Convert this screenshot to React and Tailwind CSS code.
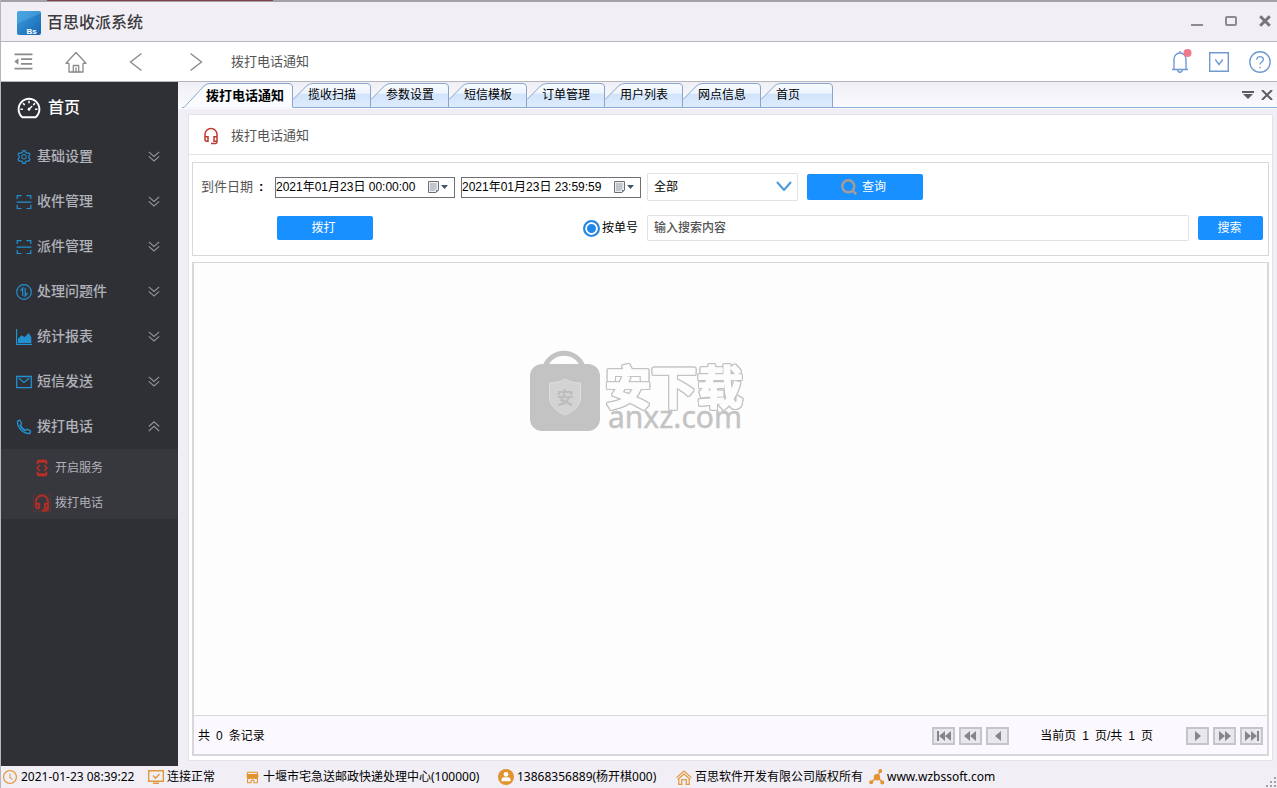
import React, { useState } from "react";
import {
  AiOutlineSetting,
  AiOutlineDashboard,
  AiOutlineClockCircle,
  AiOutlineMenuFold,
  AiFillShop,
} from "react-icons/ai";
import { MdOutlineHeadsetMic, MdDeveloperMode } from "react-icons/md";

function AreaIcon({ className }) {
  return (
    <svg viewBox="0 0 16 16" className={className} fill="currentColor">
      <path d="M0 0h1.200v14.700H16V16H0z" />
      <path d="M2 14V9.800l3.700-3.600 2.800 2L12.700 4l2.600 4.200V14z" />
    </svg>
  );
}

function ScanIcon({ className }) {
  return (
    <svg viewBox="0 0 16 16" className={className} fill="none" stroke="currentColor" strokeWidth="1.200">
      <path d="M1.200 5V1.700h4.300M10.500 1.700h4.300V5M1.200 11v3.500h4.300M10.500 14.500h4.300V11M.6 8.200h14.800" />
    </svg>
  );
}

function MailIcon({ className }) {
  return (
    <svg viewBox="0 0 16 16" className={className} fill="none" stroke="currentColor" strokeWidth="1.300">
      <path d="M.7 2.500h14.600v11.200H.7zM2.800 4.200 8 8.500l5.200-4.300" />
    </svg>
  );
}

function PhoneIcon({ className }) {
  return (
    <svg viewBox="0 0 16 16" className={className} fill="none" stroke="currentColor" strokeWidth="1.300" strokeLinejoin="round">
      <path d="M1.500 1.800 4 1.200l1.600 3.500-1.400 1.700c1.100 2.400 2.700 4 5.200 5.200l1.700-1.400 3.500 1.600-.5 2.700C6.800 14.800 1.200 9.200 1.500 1.800z" />
      <path d="M4.200 6.400c1.100 2.400 2.700 4 5.200 5.200" strokeWidth="1.800" />
    </svg>
  );
}

function SwapCircleIcon({ className }) {
  return (
    <svg viewBox="0 0 16 16" className={className} fill="none" stroke="currentColor" strokeWidth="1.200">
      <circle cx="8" cy="8" r="7.300" />
      <path d="M4.300 7 6.700 4v8.200M9.200 3.800V12l2.500-3.200" />
    </svg>
  );
}

function HouseIcon({ className }) {
  return (
    <svg viewBox="0 0 22 22" className={className} fill="none" stroke="currentColor" strokeWidth="1.3" strokeLinejoin="round" strokeLinecap="round">
      <path d="M4 12.300H1L11 1.500l10 10.800h-3V21H4z" />
      <path d="M8.300 21v-6.500h5.400V21M11 17v4" />
    </svg>
  );
}

function AngleIcon({ className, d }) {
  return (
    <svg viewBox="0 0 14 20" className={className} fill="none" stroke="currentColor" strokeWidth="1.4">
      <path d={d} />
    </svg>
  );
}

function DoubleChevron({ up }) {
  return (
    <svg viewBox="0 0 12 12" className="h-3 w-3 shrink-0" fill="none" stroke="currentColor" strokeWidth="1.100">
      <path d={up ? "M.8 5.500 6 .8l5.200 4.700M.8 10 6 5.300 11.200 10" : "M.8.800 6 5.500 11.200.8M.8 5.300 6 10l5.200-4.700"} />
    </svg>
  );
}

function BellIcon() {
  return (
    <svg viewBox="0 0 22 26" className="h-[26px] w-[22px]" fill="none" stroke="#6f9bd1" strokeWidth="1.400">
      <path d="M2 21.500h16M4 21.500V11a6 6 0 0 1 12 0v10.500M10 5V3M7.800 22a2.200 2.200 0 0 0 4.400 0" />
      <circle cx="17.500" cy="5" r="4" fill="#ee7a8a" stroke="none" />
    </svg>
  );
}

function DropBoxIcon() {
  return (
    <svg viewBox="0 0 20 20" className="h-5 w-5" fill="none" stroke="#6f9bd1" strokeWidth="1.400">
      <path d="M.7.7h18.600v18.600H.7zM6.300 7.500l3.700 5 3.700-5" />
    </svg>
  );
}

function HelpIcon() {
  return (
    <svg viewBox="0 0 22 22" className="h-[22px] w-[22px]" fill="none" stroke="#6f9bd1" strokeWidth="1.400">
      <circle cx="11" cy="11" r="10.200" />
      <path d="M7.800 8.800c0-4.300 6.600-4.100 6.600-.2 0 2.500-3.300 2.400-3.300 5" />
      <path d="M11.100 15.700v1.600" />
    </svg>
  );
}

function CalendarIcon() {
  return (
    <svg viewBox="0 0 20 14" className="h-[14px] w-5" fill="none">
      <path d="M.5 1.500h10v8.500L8 12.500H.5z" fill="#eceef2" stroke="#6d6f76" />
      <path d="M2 4h7M2 6h7M2 8h7M2 10h5M3 3v8M5 3v8M7 3v7" stroke="#a9adb8" strokeWidth=".8" />
      <path d="M10.500 10 8 12.500V10z" fill="#6d6f76" />
      <path d="M13 5h7l-3.500 4z" fill="#40566b" />
    </svg>
  );
}

function MonitorIcon() {
  return (
    <svg viewBox="0 0 16 14" className="h-[14px] w-4 shrink-0" fill="none" stroke="#e2983c" strokeWidth="1.400">
      <path d="M.7.7h14.600v10.600H.7zM5 13.300h6M5 5.500l2.500 2.700 4-4.200" />
    </svg>
  );
}

function UserIcon() {
  return (
    <svg viewBox="0 0 16 16" className="h-4 w-4 shrink-0">
      <circle cx="8" cy="8" r="8" fill="#e2922e" />
      <circle cx="8" cy="5.300" r="2.400" fill="#fff" />
      <path d="M3.500 12.200V10.500c0-1.300 1-2.300 2.300-2.300h4.400c1.300 0 2.300 1 2.300 2.300v1.700z" fill="#fff" />
    </svg>
  );
}

function CompanyIcon() {
  return (
    <svg viewBox="0 0 16 15" className="h-[15px] w-4 shrink-0" fill="none" stroke="#e2983c" strokeWidth="1.200">
      <path d="M.6 7.600 8 1l7.400 6.600M2.800 9v5.300h3V9.600h4.400v4.700h3V9M1.800 9.500 8 4l6.200 5.500" />
    </svg>
  );
}

function NetworkIcon() {
  return (
    <svg viewBox="0 0 16 16" className="h-4 w-4 shrink-0" fill="#e2922e" stroke="#e2922e">
      <path d="M8 8l3-5.500M8 8l-5.500 5M8 8l5.500 5" strokeWidth="1.400" />
      <circle cx="8" cy="8.300" r="3.200" stroke="none" />
      <circle cx="11.300" cy="2" r="1.900" stroke="none" />
      <circle cx="2.200" cy="13.200" r="2" stroke="none" />
      <circle cx="13.300" cy="13.600" r="2" stroke="none" />
    </svg>
  );
}

const menu = [
  { label: "基础设置", Icon: AiOutlineSetting },
  { label: "收件管理", Icon: ScanIcon },
  { label: "派件管理", Icon: ScanIcon },
  { label: "处理问题件", Icon: SwapCircleIcon },
  { label: "统计报表", Icon: AreaIcon },
  { label: "短信发送", Icon: MailIcon },
  { label: "拨打电话", Icon: PhoneIcon, open: true },
];

const tabs = ["揽收扫描", "参数设置", "短信模板", "订单管理", "用户列表", "网点信息", "首页"];

function TitleBar() {
  return (
    <header className="flex h-[42px] shrink-0 flex-col border-b border-[#b7b5bc] bg-[#f1eff4]">
      <div className="flex h-[2px] bg-[#a5a1a8] pl-[46px]">
        <div className="h-[1px] w-[226px] bg-[#7d4146]" />
      </div>
      <div className="flex flex-1 items-center pt-[2px] pr-[6px] pl-4">
        <svg viewBox="0 0 24 24" className="h-6 w-6">
          <defs>
            <linearGradient id="logo" x1="0" y1="0" x2="1" y2="1">
              <stop offset="0" stopColor="#3da0e0" />
              <stop offset="1" stopColor="#1565ae" />
            </linearGradient>
          </defs>
          <rect width="24" height="24" rx="2" fill="url(#logo)" />
          <path d="M0 13 24 2v-.5L22 0H2L0 2z" fill="#5cb6ea" opacity=".4" />
          <text x="9.500" y="22.500" fontSize="8" fontWeight="700" fill="#fff" fontFamily="Liberation Sans, sans-serif">Bs</text>
        </svg>
        <h1 className="ml-[6px] text-[16px] leading-6 font-medium text-[#3c3b40]">百思收派系统</h1>
        <div className="ml-auto flex items-center gap-[22px] pb-[4px] text-[#8d8a92]">
          <button aria-label="最小化" className="block">
            <svg viewBox="0 0 12 12" className="h-3 w-3"><path d="M0 10h12" stroke="currentColor" strokeWidth="2" /></svg>
          </button>
          <button aria-label="最大化" className="block">
            <svg viewBox="0 0 12 12" className="h-3 w-3"><rect x="1" y="2" width="10" height="8" rx="1" fill="none" stroke="currentColor" strokeWidth="2" /></svg>
          </button>
          <button aria-label="关闭" className="block text-[#77747c]">
            <svg viewBox="0 0 12 12" className="h-3 w-3"><path d="m1.200 1.200 9.600 9.600m0-9.600-9.600 9.600" stroke="currentColor" strokeWidth="3" /></svg>
          </button>
        </div>
      </div>
    </header>
  );
}

function Toolbar() {
  return (
    <div className="flex h-10 shrink-0 items-center border-b border-[#b7b5bc] bg-white pr-[6px] pl-[11px] text-[#8b8b8d]">
      <button aria-label="收起菜单"><AiOutlineMenuFold className="h-[23px] w-[23px]" /></button>
      <button aria-label="主页" className="ml-[30px]"><HouseIcon className="h-[22px] w-[22px]" /></button>
      <button aria-label="后退" className="ml-[42px]"><AngleIcon className="h-5 w-[14px]" d="M12.500 1.500 1.500 10l11 8.500" /></button>
      <button aria-label="前进" className="ml-[46px]"><AngleIcon className="h-5 w-[14px]" d="M1.500 1.500 12.500 10l-11 8.500" /></button>
      <span className="ml-7 text-[13px] leading-5 text-[#555]">拨打电话通知</span>
      <div className="ml-auto flex items-center">
        <button aria-label="消息" className="pb-[2px]"><BellIcon /></button>
        <button aria-label="下拉" className="ml-[17px]"><DropBoxIcon /></button>
        <button aria-label="帮助" className="ml-5"><HelpIcon /></button>
      </div>
    </div>
  );
}

function Sidebar() {
  return (
    <nav className="w-[177px] shrink-0 bg-[#2f3036]">
      <a href="#home" className="flex h-[52px] items-center gap-[6px] pl-[15px] text-[16px] font-medium text-white">
        <AiOutlineDashboard className="h-[26px] w-[26px]" />
        首页
      </a>
      {menu.map(({ label, Icon, open }) => (
        <button key={label} aria-expanded={!!open} className="flex h-[45px] w-full items-center pr-[18px] pl-[15px] text-[14px] font-medium text-[#b1b1b9]">
          <Icon className="h-4 w-4 text-[#2391cf]" />
          <span className="ml-[5px]">{label}</span>
          <span className="ml-auto text-[#94949a]"><DoubleChevron up={open} /></span>
        </button>
      ))}
      <div className="bg-[#37383e] text-[12px] text-[#b1b1b9]">
        <a href="#service" className="flex h-[35px] items-center gap-1 pt-[2px] pl-8">
          <MdDeveloperMode className="h-[18px] w-[18px] text-[#bb2d25]" />
          开启服务
        </a>
        <a href="#call" className="flex h-[35px] items-center gap-1 pt-[2px] pl-8">
          <MdOutlineHeadsetMic className="h-[18px] w-[18px] text-[#bb2d25]" stroke="currentColor" strokeWidth=".6" />
          拨打电话
        </a>
      </div>
    </nav>
  );
}

function Tab({ label, last }) {
  const w = last ? 72 : 78;
  return (
    <button role="tab" className={last ? "relative h-[25px] w-[72px] pl-[15px] text-left" : "relative h-[25px] w-[78px] pl-[15px] text-left"}>
      <svg className="absolute inset-0 h-full w-full" viewBox={`0 0 ${w} 25`} preserveAspectRatio="none">
        <defs>
          <linearGradient id="tabfill" x1="0" y1="0" x2="0" y2="1">
            <stop offset="0" stopColor="#f9fcff" />
            <stop offset=".4" stopColor="#ecf4fe" />
            <stop offset=".45" stopColor="#d2e4fb" />
            <stop offset="1" stopColor="#deecfd" />
          </linearGradient>
        </defs>
        <path d={`M0 24.500V16.500L13.500 3Q16 .5 20 .5H${w - 4}q3.500 0 3.500 3.500v20.500z`} fill="url(#tabfill)" />
        <path d={`M0 16.500 13.500 3Q16 .5 20 .5H${w - 4}q3.500 0 3.500 3.500v20.500`} fill="none" stroke="#8aa5cc" />
        <path d={`M0 24.500H${w}`} stroke="#8aaed6" />
      </svg>
      <span className="relative">{label}</span>
    </button>
  );
}

function TabStrip() {
  return (
    <div className="flex h-[27px] shrink-0 bg-linear-to-b from-[#efeef4] to-[#fcfcff] pt-[1px] pl-1 text-[12px] leading-[25px] text-black">
      <div role="tablist" className="flex h-[25px]">
        <button role="tab" aria-selected="true" className="relative h-[25px] w-[111px] pl-6 text-left text-[13px] font-bold">
          <svg className="absolute inset-0 h-full w-full" viewBox="0 0 111 25" preserveAspectRatio="none">
            <path d="M0 24.500h2L22 3Q24.500.5 28 .5h79q3.500 0 3.500 3.500v20.500" fill="#fafcff" stroke="#8aa5cc" />
            <path d="M3 24.500h107" stroke="#f5f5f9" />
          </svg>
          <span className="relative">拨打电话通知</span>
        </button>
        {tabs.map((t, i) => <Tab key={t} label={t} last={i === tabs.length - 1} />)}
      </div>
      <div className="flex h-[25px] flex-1 items-center justify-end gap-[7px] border-b border-[#8aaed6] pr-1 text-[#5c5c62]">
        <button aria-label="标签列表">
          <svg viewBox="0 0 12 10" className="h-[10px] w-3" fill="currentColor"><path d="M0 1h12v2H0zM1 4h10L6 9z" /></svg>
        </button>
        <button aria-label="关闭标签">
          <svg viewBox="0 0 12 10" className="h-[10px] w-3"><path d="m1 0 10 10M11 0 1 10" stroke="currentColor" strokeWidth="2" /></svg>
        </button>
      </div>
    </div>
  );
}

function DateField({ label, initial }) {
  const [value, setValue] = useState(initial);
  return (
    <div className="flex h-[21px] w-[180px] items-center border border-[#6f6f74] bg-white">
      <input aria-label={label} value={value} onChange={(e) => setValue(e.target.value)} className="w-[152px] min-w-0 text-[12px] leading-4 text-black outline-none" />
      <button aria-label={label + "选择"}><CalendarIcon /></button>
    </div>
  );
}

function Filters() {
  return (
    <form className="mx-[3px] mt-[7px] flex flex-col gap-[14px] border border-[#d8d8dc] px-2 pt-[10px] pb-[14px] text-[12px]" onSubmit={(e) => e.preventDefault()}>
      <div className="flex h-7 items-center">
        <span className="w-[74px] text-[13px] text-[#555]">到件日期<span className="ml-[6px] font-bold text-black">:</span></span>
        <DateField label="开始日期" initial="2021年01月23日 00:00:00" />
        <div className="ml-[6px]"><DateField label="结束日期" initial="2021年01月23日 23:59:59" /></div>
        <div className="relative ml-[6px] h-7 w-[151px]">
          <select aria-label="筛选" className="h-7 w-full appearance-none rounded-[1px] border border-[#e2e2e5] bg-white pl-[6px] text-black">
            <option>全部</option>
          </select>
          <svg viewBox="0 0 16 10" className="pointer-events-none absolute top-2 right-[6px] h-[10px] w-4" fill="none" stroke="#4a98d9" strokeWidth="2">
            <path d="m1 1 7 8L15 1" />
          </svg>
        </div>
        <button className="ml-[9px] flex h-[26px] w-[116px] items-center justify-center gap-[5px] rounded-xs bg-[#1890ff] pr-[3px] text-white">
          <svg viewBox="0 0 16 16" className="h-4 w-4" fill="none" stroke="#a99b96" strokeWidth="2.400">
            <circle cx="7.300" cy="7.300" r="6" />
            <path d="m11.300 11.300 4 4" />
          </svg>
          查询
        </button>
      </div>
      <div className="flex h-[26px] items-center">
        <button className="ml-[76px] h-6 w-24 rounded-xs bg-[#1890ff] pr-[3px] text-white">拨打</button>
        <label className="ml-[210px] flex items-center gap-[2px] text-black">
          <input type="radio" name="by" defaultChecked className="h-[17px] w-[17px] appearance-none rounded-full border-2 border-[#2a87e0] bg-[#1f86ea] shadow-[inset_0_0_0_2px_white]" />
          按单号
        </label>
        <input aria-label="搜索内容" placeholder="输入搜索内容" className="ml-[9px] h-[26px] min-w-0 flex-1 rounded-[1px] border border-[#e2e2e5] bg-white pl-[6px] font-medium text-[#555] outline-none placeholder:text-[#555]" />
        <button className="mr-[-3px] ml-[9px] h-6 w-[65px] rounded-xs bg-[#1890ff] pr-[2px] text-white">搜索</button>
      </div>
    </form>
  );
}

function PagerButton({ label, d }) {
  return (
    <button aria-label={label} className="h-[18px] w-[23px] border-2 border-[#c6c5ca] bg-[#e9e8ed]">
      <svg viewBox="0 0 19 14" className="h-[14px] w-[19px]" fill="#85858b"><path d={d} /></svg>
    </button>
  );
}

function Pager() {
  return (
    <div className="flex h-[39px] items-center border-t border-[#d8d8dc] bg-[#fbf9fd] pt-[2px] pr-1 pl-1 text-[12px] text-black">
      <p className="flex gap-[6px]"><span>共</span><span>0</span><span>条记录</span></p>
      <div className="ml-auto flex items-center gap-1">
        <PagerButton label="第一页" d="M3 2h2v10H3zM11 2v10L5 7zM17 2v10l-6-5z" />
        <PagerButton label="快退" d="M9 2v10L3 7zM15 2v10L9 7z" />
        <PagerButton label="上一页" d="M13 2v10L7 7z" />
      </div>
      <p className="ml-[31px] flex gap-[6px]"><span>当前页</span><span>1</span><span>页/共</span><span>1</span><span>页</span></p>
      <div className="ml-[33px] flex items-center gap-1">
        <PagerButton label="下一页" d="M7 2v10l6-5z" />
        <PagerButton label="快进" d="M4 2v10l6-5zM10 2v10l6-5z" />
        <PagerButton label="最后一页" d="M3 2v10l6-5zM9 2v10l6-5zM15 2h2v10h-2z" />
      </div>
    </div>
  );
}

function Watermark() {
  return (
    <div className="pointer-events-none absolute inset-0 flex items-center justify-center pr-[2px]">
      <svg viewBox="0 -4 220 96" className="h-24 w-[220px]">
        <path d="M17 17a20 20 0 0 1 38 0" fill="none" stroke="#c3c3c3" strokeWidth="5" />
        <rect x="2" y="14" width="70" height="67" rx="12" fill="#c3c3c3" />
        <path d="M37 29c5 3 10 4 15.500 4v14c0 9-7 14-15.500 18-8.500-4-15.500-9-15.500-18V33c5.500 0 10.500-1 15.500-4z" fill="#d3d3d3" stroke="#dedede" />
        <text x="37" y="54" textAnchor="middle" fontSize="17" fontWeight="700" fill="#bdbdbd">安</text>
        <g className="[filter:drop-shadow(1px_0_#c3c3c3)_drop-shadow(-1px_0_#c3c3c3)_drop-shadow(0_1px_#c3c3c3)_drop-shadow(0_-1px_#c3c3c3)]">
          <text x="77" y="54" fontSize="46" fontWeight="700" fill="#fdfdfd" stroke="#fdfdfd" strokeWidth="1.500" strokeLinejoin="round">安下载</text>
        </g>
        <text x="80" y="78" fontSize="30" fontFamily="Noto Sans, sans-serif" fill="#c3c3c3" stroke="#c3c3c3" strokeWidth=".4">anxz.com</text>
      </svg>
    </div>
  );
}

function StatusBar() {
  return (
    <footer className="flex h-[22px] shrink-0 items-center bg-[#f1eff5] pl-[1px] font-['Noto_Sans','Noto_Sans_CJK_SC',sans-serif] text-[12px] leading-5 text-black">
      <span className="flex w-[146px] items-center gap-[3px]"><AiOutlineClockCircle className="h-4 w-4 text-[#e2983c]" />2021-01-23 08:39:22</span>
      <span className="flex w-[97px] items-center gap-[3px]"><MonitorIcon />连接正常</span>
      <span className="flex w-[253px] items-center gap-[3px]"><AiFillShop className="h-[15px] w-[15px] text-[#e2922e]" />十堰市宅急送邮政快递处理中心(100000)</span>
      <span className="flex w-[178px] items-center gap-[3px]"><UserIcon />13868356889(杨开棋000)</span>
      <span className="flex w-[193px] items-center gap-[3px]"><CompanyIcon />百思软件开发有限公司版权所有</span>
      <a href="#site" className="flex items-center gap-[2px]"><NetworkIcon />www.wzbssoft.com</a>
      <svg viewBox="0 0 12 12" className="ml-auto h-3 w-3 self-end" fill="#a3a1a8">
        <path d="M9 1h2v2H9zM5 5h2v2H5zM9 5h2v2H9zM1 9h2v2H1zM5 9h2v2H5zM9 9h2v2H9z" />
      </svg>
    </footer>
  );
}

export default function App() {
  return (
    <div className="relative flex min-h-screen flex-col border-l border-[#b7b5bc] bg-[#f1eff5] font-['Liberation_Sans','Noto_Sans_CJK_SC',sans-serif]">
      <TitleBar />
      <Toolbar />
      <div className="flex flex-1">
        <Sidebar />
        <main className="flex min-w-0 flex-1 flex-col">
          <TabStrip />
          <section className="mx-1 mt-[5px] mb-[5px] ml-[10px] flex flex-1 flex-col border border-[#e4e3e8] bg-white">
            <div className="flex h-10 shrink-0 items-center border-b border-[#e4e3e8] pt-[2px] pl-[13px]">
              <MdOutlineHeadsetMic className="h-[18px] w-[18px] text-[#c0392f]" />
              <h2 className="ml-[11px] text-[13px] leading-5 text-[#555]">拨打电话通知</h2>
            </div>
            <Filters />
            <div className="mx-[3px] mt-[6px] mb-1 flex flex-1 flex-col border-2 border-t border-[#d8d8dc] bg-[#fdfdfd]">
              <div className="flex-1" />
              <Pager />
            </div>
          </section>
        </main>
      </div>
      <StatusBar />
      <Watermark />
    </div>
  );
}
